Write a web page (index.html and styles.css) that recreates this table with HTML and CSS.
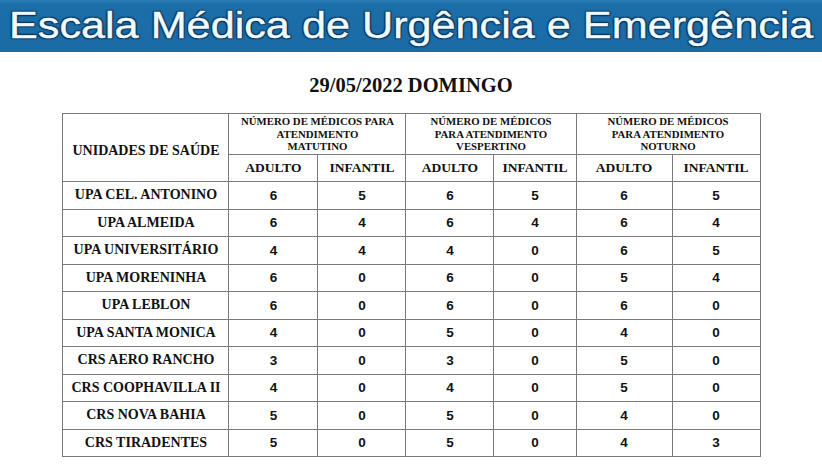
FILE: index.html
```html
<!DOCTYPE html>
<html lang="pt-BR">
<head>
<meta charset="utf-8">
<title>Escala Médica de Urgência e Emergência</title>
<link rel="stylesheet" href="styles.css">
</head>
<body>
<header class="banner">
  <h1 class="banner-title">Escala Médica de Urgência e Emergência</h1>
</header>
<main class="page">
  <h2 class="date">29/05/2022 DOMINGO</h2>
  <table class="scale">
    <colgroup>
      <col class="c-unit"><col class="c-a1"><col class="c-i1"><col class="c-a2"><col class="c-i2"><col class="c-a3"><col class="c-i3">
    </colgroup>
    <thead>
      <tr class="head1">
        <th rowspan="2" class="unit-head">UNIDADES DE SAÚDE</th>
        <th colspan="2" class="group">NÚMERO DE MÉDICOS PARA<br>ATENDIMENTO<br>MATUTINO</th>
        <th colspan="2" class="group">NÚMERO DE MÉDICOS<br>PARA ATENDIMENTO<br>VESPERTINO</th>
        <th colspan="2" class="group">NÚMERO DE MÉDICOS<br>PARA ATENDIMENTO<br>NOTURNO</th>
      </tr>
      <tr class="head2">
        <th>ADULTO</th><th>INFANTIL</th><th>ADULTO</th><th>INFANTIL</th><th>ADULTO</th><th>INFANTIL</th>
      </tr>
    </thead>
    <tbody>
      <tr><th>UPA CEL. ANTONINO</th><td>6</td><td>5</td><td>6</td><td>5</td><td>6</td><td>5</td></tr>
      <tr><th>UPA ALMEIDA</th><td>6</td><td>4</td><td>6</td><td>4</td><td>6</td><td>4</td></tr>
      <tr><th>UPA UNIVERSITÁRIO</th><td>4</td><td>4</td><td>4</td><td>0</td><td>6</td><td>5</td></tr>
      <tr><th>UPA MORENINHA</th><td>6</td><td>0</td><td>6</td><td>0</td><td>5</td><td>4</td></tr>
      <tr><th>UPA LEBLON</th><td>6</td><td>0</td><td>6</td><td>0</td><td>6</td><td>0</td></tr>
      <tr><th>UPA SANTA MONICA</th><td>4</td><td>0</td><td>5</td><td>0</td><td>4</td><td>0</td></tr>
      <tr><th>CRS AERO RANCHO</th><td>3</td><td>0</td><td>3</td><td>0</td><td>5</td><td>0</td></tr>
      <tr><th>CRS COOPHAVILLA II</th><td>4</td><td>0</td><td>4</td><td>0</td><td>5</td><td>0</td></tr>
      <tr><th>CRS NOVA BAHIA</th><td>5</td><td>0</td><td>5</td><td>0</td><td>4</td><td>0</td></tr>
      <tr><th>CRS TIRADENTES</th><td>5</td><td>0</td><td>5</td><td>0</td><td>4</td><td>3</td></tr>
    </tbody>
  </table>
</main>
</body>
</html>
```

FILE: styles.css
```css
html, body {
  margin: 0;
  padding: 0;
  background: #ffffff;
}

.banner {
  height: 52px;
  background: linear-gradient(#2a7cb4 0px, #1c6ea8 4px, #1b6ca6 100%);
  display: flex;
  align-items: center;
  justify-content: center;
  overflow: hidden;
}

.banner-title {
  margin: 0;
  font-family: "Liberation Sans", Arial, sans-serif;
  font-weight: normal;
  font-size: 36px;
  line-height: 52px;
  color: #eefaff;
  white-space: nowrap;
  transform: scaleX(1.2);
  -webkit-text-stroke: 0.4px #eefaff;
  text-shadow: 0 0 2px #0b3558, 1px 1px 1px #0b3558, -1px -1px 1px #0b3558, 1px -1px 1px #0b3558, -1px 1px 1px #0b3558;
}

.page {
  display: flex;
  flex-direction: column;
  align-items: center;
}

.date {
  margin: 21px 0 0 0;
  font-family: "Liberation Serif", "Times New Roman", serif;
  font-weight: bold;
  font-size: 20.5px;
  line-height: 24px;
  color: #111;
  height: 40px;
}

.scale {
  border-collapse: collapse;
  table-layout: fixed;
  width: 697px;
  margin-left: 1px;
  color: #111;
}

.c-unit { width: 166px; }
.c-a1 { width: 89px; }
.c-i1 { width: 88px; }
.c-a2 { width: 88px; }
.c-i2 { width: 82px; }
.c-a3 { width: 96px; }
.c-i3 { width: 88px; }

.scale th,
.scale td {
  border: 1px solid #7a7a7a;
  padding: 0;
  text-align: center;
  vertical-align: middle;
}

.scale th {
  font-family: "Liberation Serif", "Times New Roman", serif;
  font-weight: bold;
  font-size: 14px;
  white-space: nowrap;
}

.head1 { height: 41px; }

.scale .group {
  font-size: 10.8px;
  line-height: 12.5px;
  vertical-align: top;
  padding-top: 1px;
}

.scale .unit-head {
  font-size: 14px;
  padding-top: 6px;
}

.head2 { height: 27px; }

.scale .head2 th {
  font-size: 13.5px;
}

.scale tbody tr { height: 27.5px; }

.scale td {
  font-family: "Liberation Sans", Arial, sans-serif;
  font-weight: bold;
  font-size: 13.5px;
}
```
